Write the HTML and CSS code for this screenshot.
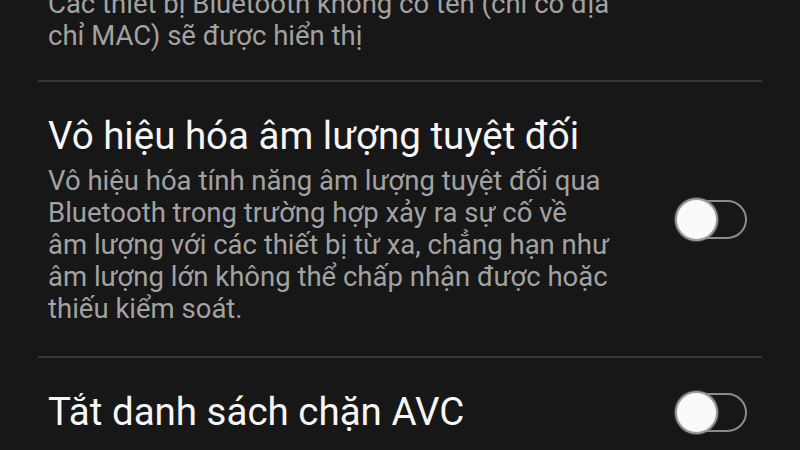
FILE: index.html
```html
<!DOCTYPE html>
<html lang="vi">
<head>
<meta charset="utf-8">
<link rel="stylesheet" href="styles.css">
</head>
<body>
<div class="list">
  <div class="row row-top">
    <div class="text">
      <div class="desc">Các thiết bị Bluetooth không có tên (chỉ có địa<br>chỉ MAC) sẽ được hiển thị</div>
    </div>
  </div>
  <div class="row">
    <div class="text">
      <div class="title">Vô hiệu hóa âm lượng tuyệt đối</div>
      <div class="desc">Vô hiệu hóa tính năng âm lượng tuyệt đối qua<br>Bluetooth trong trường hợp xảy ra sự cố về<br>âm lượng với các thiết bị từ xa, chẳng hạn như<br>âm lượng lớn không thể chấp nhận được hoặc<br>thiếu kiểm soát.</div>
    </div>
    <div class="switch"><span class="track"></span><span class="thumb"></span></div>
  </div>
  <div class="row row-last">
    <div class="text">
      <div class="title">Tắt danh sách chặn AVC</div>
    </div>
    <div class="switch"><span class="track"></span><span class="thumb"></span></div>
  </div>
</div>
</body>
</html>
```
FILE: styles.css
```css
html, body {
  margin: 0;
  padding: 0;
  background: #171717;
  width: 800px;
  height: 450px;
  overflow: hidden;
  font-family: Roboto, "Noto Sans", sans-serif;
}
.list {
  margin: 0 38px;
}
.row {
  display: flex;
  align-items: center;
  justify-content: space-between;
  padding: 32px 15px 31px 10px;
  border-bottom: 2px solid #383838;
}
.row-top {
  margin-top: -12px;
  padding-top: 0;
  padding-bottom: 28px;
}
.row-last {
  border-bottom: none;
  padding-bottom: 28px;
}
.title {
  color: #f6f6f6;
  font-size: 38.5px;
  line-height: 44px;
  margin-bottom: 7px;
}
.row-last .title {
  margin-bottom: 0;
}
.desc {
  color: #a2a2a2;
  font-size: 27.5px;
  line-height: 32px;
}
.switch {
  position: relative;
  width: 72px;
  height: 43px;
  flex: none;
}
.track {
  position: absolute;
  right: 0;
  top: 2px;
  width: 66px;
  height: 35px;
  border: 2px solid #8c8c8c;
  border-radius: 20px;
}
.thumb {
  position: absolute;
  left: 0;
  top: 0;
  width: 39px;
  height: 39px;
  border: 2px solid #9c9c9c;
  border-radius: 50%;
  background: #fafafa;
  box-shadow: 0 0 1px 1px rgba(120,120,120,0.5);
}
```
